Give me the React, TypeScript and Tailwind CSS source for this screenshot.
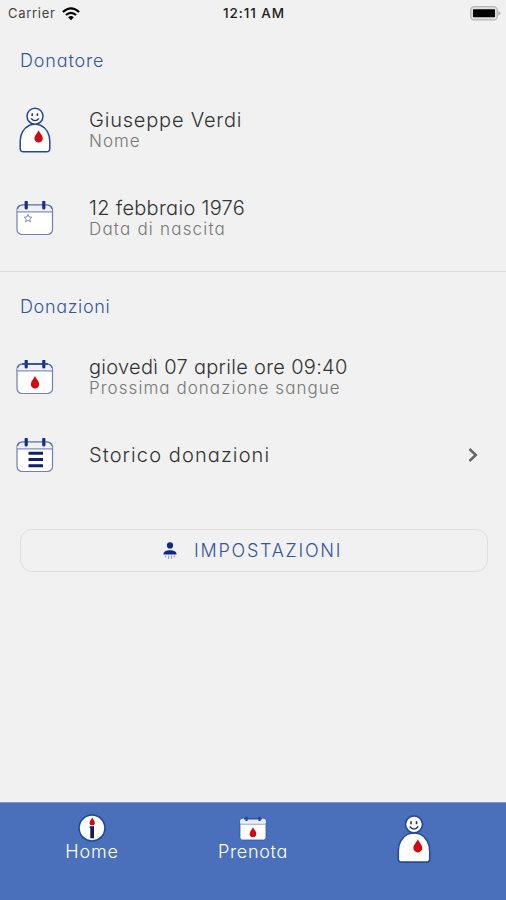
import type { ReactNode } from 'react';

const DROP = 'M0 -6C1 -3.5 4.2 -0.8 4.2 2.2A4.2 4.2 0 0 1 -4.2 2.2C-4.2 -0.8 -1 -3.5 0 -6Z';

const DonorIcon = ({ className }: { className?: string }) => (
  <svg className={className} viewBox="0 0 32 46" fill="none">
    <path
      d="M10.5 18.2C4.5 21 1.2 27.5 1.2 34V41.5C1.2 43.8 2.3 44.8 4.5 44.8H27.5C29.7 44.8 30.8 43.8 30.8 41.5V34C30.8 27.5 27.5 21 21.5 18.2Q16 16.4 10.5 18.2Z"
      fill="#fff"
      stroke="#27479a"
      strokeWidth="1.5"
    />
    <circle cx="16" cy="9.2" r="8" fill="#fff" stroke="#27479a" strokeWidth="1.5" />
    <path d="M13.2 6.2V9M18.4 6.2V9" stroke="#152f86" strokeWidth="1.5" />
    <path d="M12 11.3Q16 16 20 11.3" stroke="#152f86" strokeWidth="1.3" />
    <path d={DROP} transform="translate(19.6 29.2)" fill="#d10a10" />
  </svg>
);

const CalendarIcon = ({ children }: { children?: ReactNode }) => (
  <svg className="h-[35px] w-[38px]" viewBox="0 0 38 35" fill="none">
    <rect x="1" y="4" width="35.5" height="29.5" rx="5" fill="#fff" stroke="#6f7fb8" strokeWidth="1.2" />
    <path d="M1.5 10V9A5 5 0 0 1 6.5 4H31A5 5 0 0 1 36 9V10Z" fill="#f1f1f4" />
    <path d="M1 10.8H36.5" stroke="#7f8cc0" strokeWidth="1.3" />
    <path d="M1.6 8Q2.5 4 7 4H30.5Q35 4 36 8" stroke="#5268ae" strokeWidth="1.2" />
    <path d="M10.2 1V7M27.8 1V7" stroke="#152f86" strokeWidth="3.2" strokeLinecap="round" />
    {children}
  </svg>
);

const HomeIcon = () => (
  <svg className="h-7 w-7" viewBox="0 0 28 28">
    <circle cx="14" cy="14" r="12.9" fill="#fff" stroke="#1d479c" strokeWidth="1.5" />
    <path d={DROP} transform="translate(14.2 7.3) scale(.62)" fill="#d10a10" />
    <path d="M12 12.3H16V24.2H12.3V13.8H11.3Z" fill="#0b1e4d" />
  </svg>
);

const BookIcon = () => (
  <svg className="h-[25px] w-7" viewBox="0 0 28 25">
    <rect x="1" y="2.8" width="26" height="21.2" rx="2.5" fill="#fff" stroke="#34579f" strokeWidth=".8" />
    <path d="M1.2 7V5Q1.2 2.8 4 2.8H24Q26.8 2.8 26.8 5V7Z" fill="#e9edf8" />
    <path d="M1 8.2H27" stroke="#9baad3" strokeWidth="1.2" />
    <path d="M5 2.8H23" stroke="#1d479c" strokeWidth="1.3" />
    <path d="M7.5 .8V5M20.5 .8V5" stroke="#1d479c" strokeWidth="2.2" />
    <path d={DROP} transform="translate(14 16) scale(.8)" fill="#d10a10" />
  </svg>
);

const SettingsIcon = () => (
  <svg className="h-[18px] w-[14px]" viewBox="0 0 14 18" fill="none">
    <circle cx="7" cy="3.4" r="3.1" fill="#10288a" />
    <path d="M.4 12.5C.4 9.5 3.4 8.2 7 8.2S13.6 9.5 13.6 12.5Z" fill="#10288a" />
    <path d="M2.7 13.5V15.4M5.6 13.5V17M8.4 13.5V17M11.3 13.5V15.4" stroke="#8390c0" strokeWidth=".9" />
  </svg>
);

const Wifi = () => (
  <svg className="h-[14px] w-[18px]" viewBox="0 0 18 14" fill="none" stroke="#000">
    <path d="M.9 5Q9-2.2 17.1 5" strokeWidth="2.3" />
    <path d="M3.9 8Q9 3.6 14.1 8" strokeWidth="2.2" />
    <path d="M6.2 10.2Q9 8 11.8 10.2L9 13.2Z" fill="#000" stroke="none" />
  </svg>
);

const Battery = () => (
  <svg className="h-[15px] w-[31px]" viewBox="0 0 31 15">
    <rect x=".7" y=".7" width="26.6" height="13.2" rx="3.5" fill="#e0e0e0" stroke="#b5b5b5" strokeWidth="1.3" />
    <rect x="3" y="3.2" width="22" height="8" rx=".6" fill="#000" />
    <path d="M28.5 4.7L30.7 7.3L28.5 9.8Z" fill="#a5a5a5" />
  </svg>
);

type RowProps = {
  icon: ReactNode;
  title: string;
  titleClass: string;
  sub?: string;
  subClass?: string;
};

const Row = ({ icon, title, titleClass, sub, subClass }: RowProps) => (
  <div className="flex h-[88px] items-center">
    <div className="flex w-[73px] shrink-0 justify-start">{icon}</div>
    <div className="whitespace-nowrap pt-px leading-[21px]">
      <p className={`text-[20px] text-[#333] ${titleClass}`}>{title}</p>
      {sub && <p className={`text-[17px] text-[#777] ${subClass}`}>{sub}</p>}
    </div>
  </div>
);

const App = () => {
  return (
    <div className="flex h-[900px] w-[506px] flex-col overflow-hidden bg-[#f1f1f1] font-['Inter',sans-serif] font-light [font-feature-settings:'cv11']">
      <header className="grid h-[26px] shrink-0 grid-cols-3 items-center pl-2 pr-[5px] pt-px text-[13px] font-normal text-[#222]">
        <div className="flex items-center gap-[6px]">
          <span className="tracking-[0.7px] text-[#444] [font-feature-settings:normal]">Carrier</span>
          <Wifi />
        </div>
        <span className="pr-px text-center text-[13.5px] font-medium tracking-[0.9px]">12:11 AM</span>
        <div className="flex justify-end">
          <Battery />
        </div>
      </header>

      <main className="flex-1">
        <section className="border-b border-[#dcdcdc] pb-[9px] pl-4 pt-2">
          <h2 className="flex h-[52px] items-center pl-1 text-[18px] tracking-[0.85px] text-[#35569c]">Donatore</h2>
          <Row
            icon={<DonorIcon className="ml-[3px] h-[46px] w-8" />}
            title="Giuseppe Verdi"
            titleClass="tracking-[0.8px]"
            sub="Nome"
            subClass="tracking-[1px]"
          />
          <Row
            icon={
              <CalendarIcon>
                <path
                  d="M12 13.5L13.1 16L15.8 16.2L13.8 18L14.5 20.8L12 19.3L9.5 20.8L10.2 18L8.2 16.2L10.9 16Z"
                  stroke="#7280b5"
                  strokeWidth=".9"
                />
              </CalendarIcon>
            }
            title="12 febbraio 1976"
            titleClass="tracking-[0.3px]"
            sub="Data di nascita"
            subClass="tracking-[1.2px]"
          />
        </section>

        <section className="pl-4 pt-2">
          <h2 className="flex h-[53px] items-center pl-1 text-[18px] tracking-[0.65px] text-[#35569c]">Donazioni</h2>
          <Row
            icon={
              <CalendarIcon>
                <path d="M6 4H32" stroke="#1d479c" strokeWidth="1.6" />
                <path d={DROP} transform="translate(19 22)" fill="#d10a10" />
              </CalendarIcon>
            }
            title="giovedì 07 aprile ore 09:40"
            titleClass="tracking-[0.3px]"
            sub="Prossima donazione sangue"
            subClass="tracking-[1.05px]"
          />
          <div className="flex h-[68px] items-center justify-between pr-[28px]">
            <div className="flex items-center">
              <div className="w-[73px]">
                <CalendarIcon>
                  <path d="M12.5 15.2H27M12.5 21.5H27M12.5 27.7H27" stroke="#10206f" strokeWidth="3" />
                </CalendarIcon>
              </div>
              <p className="text-[20px] tracking-[1.1px] text-[#333]">Storico donazioni</p>
            </div>
            <svg className="h-4 w-[10px]" viewBox="0 0 10 16" fill="none">
              <path d="M1.5 2L7.8 8L1.5 14" stroke="#666" strokeWidth="2.5" />
            </svg>
          </div>
        </section>

        <button
          type="button"
          className="ml-5 mt-10 flex h-[43px] w-[468px] items-center rounded-xl border border-[#dfdfdf] pl-[142px] text-[18px] text-[#35569c]">
          <SettingsIcon />
          <span className="ml-[17px] pb-px tracking-[1.75px]">IMPOSTAZIONI</span>
        </button>
      </main>

      <nav className="flex h-[98px] shrink-0 justify-center border-t border-[#8198c9] bg-[#4a70bb] text-[18px] leading-[18px] text-white">
        <div className="flex w-[161px] flex-col items-center pt-[11px]">
          <HomeIcon />
          <span className="mt-px tracking-[0.8px]">Home</span>
        </div>
        <div className="flex w-[161px] flex-col items-center pt-[13px]">
          <BookIcon />
          <span className="mt-[2px] tracking-[0.7px]">Prenota</span>
        </div>
        <div className="flex w-[161px] flex-col items-center pt-[11px]">
          <DonorIcon className="h-[50px] w-[34px]" />
        </div>
      </nav>
    </div>
  );
};

export default App;
